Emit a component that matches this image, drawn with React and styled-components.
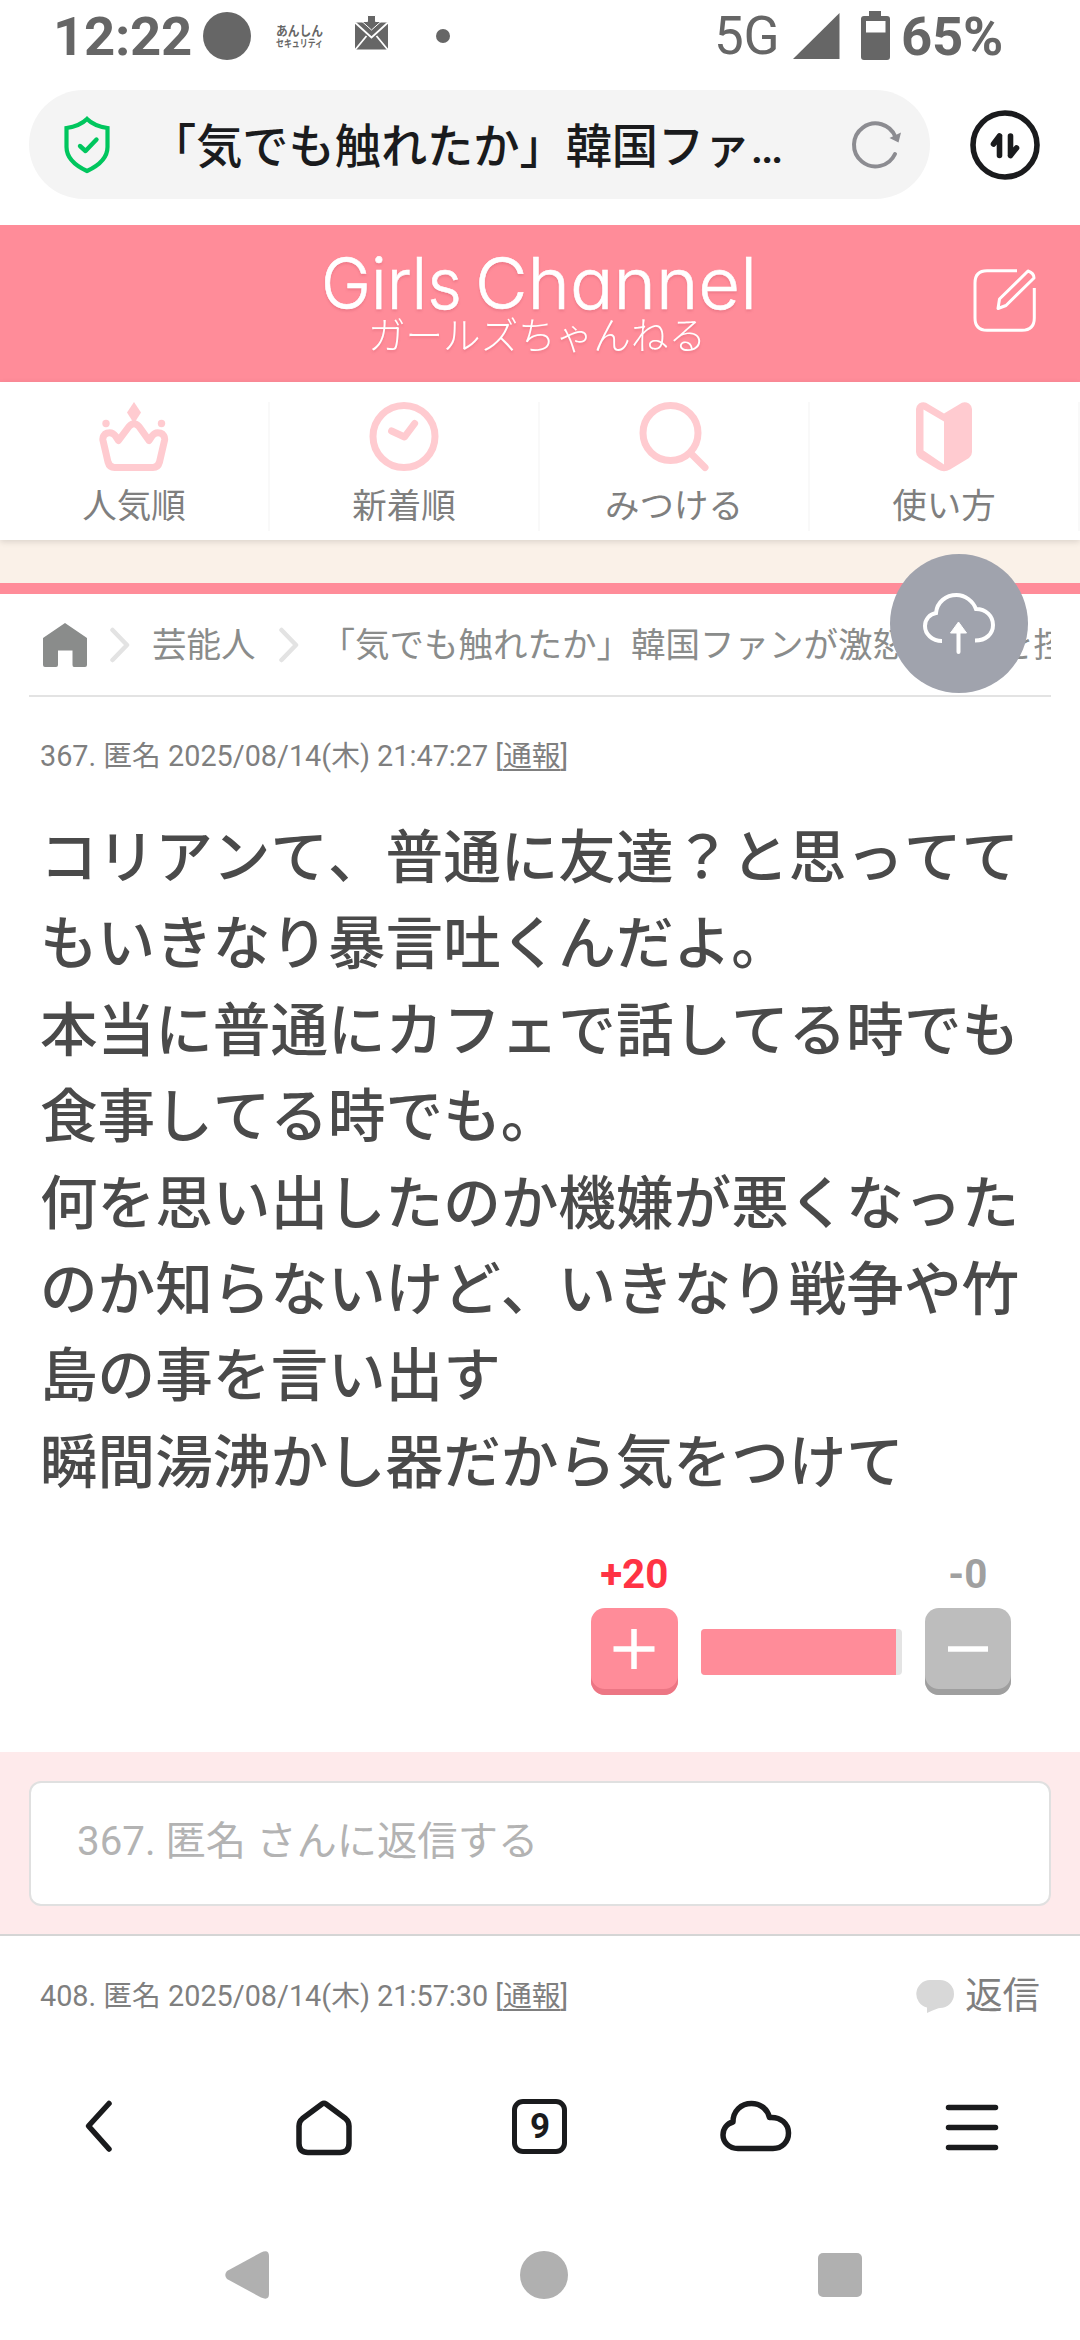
import styled, { createGlobalStyle } from "styled-components";

const menus = [
  { label: "人気順", icon: <CrownIcon /> },
  { label: "新着順", icon: <ClockIcon /> },
  { label: "みつける", icon: <SearchIcon /> },
  { label: "使い方", icon: <BeginnerIcon /> },
];

const commentLines = [
  "コリアンて、普通に友達？と思っててもいきなり暴言吐くんだよ。",
  "本当に普通にカフェで話してる時でも食事してる時でも。",
  "何を思い出したのか機嫌が悪くなったのか知らないけど、いきなり戦争や竹島の事を言い出す",
  "瞬間湯沸かし器だから気をつけて",
];

function App() {
  return (
    <>
      <GlobalStyle />
      <StScreen>
        <StatusBar />
        <AddressBar />
        <SiteHeader />
        <StMenu>
          {menus.map(({ label, icon }) => (
            <StMenuItem key={label}>
              {icon}
              <span>{label}</span>
            </StMenuItem>
          ))}
        </StMenu>
        <StAdSpace />
        <Breadcrumb />
        <StComment>
          <Meta number="367" time="2025/08/14(木) 21:47:27" />
          <StCommentBody>
            {commentLines.map((line) => (
              <p key={line}>{line}</p>
            ))}
          </StCommentBody>
          <Votes plus={20} minus={0} />
        </StComment>
        <StReplyArea>
          <StReplyInput>367. 匿名 さんに返信する</StReplyInput>
        </StReplyArea>
        <StNextComment>
          <Meta number="408" time="2025/08/14(木) 21:57:30" />
          <StReplyLink>
            <svg width="38" height="33" viewBox="0 0 38 33">
              <path
                d="M14 0H24A14 14 0 0 1 24 28Q22 28 11 33V27.6A14 14 0 0 1 14 0Z"
                fill="#d8d8d8"
              />
            </svg>
            <span>返信</span>
          </StReplyLink>
        </StNextComment>
        <BrowserToolbar />
        <SystemNavigation />
        <StUploadButton>
          <svg width="74" height="64" viewBox="0 0 74 64">
            <path
              d="M20 49C10 49 3 42 3 34C3 27 8 22 14 21C15 10 24 3 34.5 3C43 3 51 9 54 17C64 17 71 24 71 33C71 42 64 48.500 53 48.500"
              fill="none"
              stroke="#fff"
              strokeWidth="4"
            />
            <path d="M36.500 60V38" stroke="#fff" strokeWidth="4" strokeLinecap="round" />
            <path d="M36.500 30L44.500 41H28.500Z" fill="#fff" stroke="#fff" strokeLinejoin="round" />
          </svg>
        </StUploadButton>
      </StScreen>
    </>
  );
}

export default App;

function StatusBar() {
  return (
    <StStatusBar>
      <StStatusGroup>
        <StStatusText $width={137}>12:22</StStatusText>
        <svg width="260" height="72" viewBox="190 0 260 72" fill="#666">
          <circle cx="227" cy="36" r="24" />
          <text x="276" y="35" fontSize="13" fontWeight="700" textLength="47" lengthAdjust="spacingAndGlyphs">
            あんしん
          </text>
          <text
            x="276"
            y="47"
            fontSize="10.500"
            fontWeight="700"
            textLength="47"
            lengthAdjust="spacingAndGlyphs"
          >
            セキュリティ
          </text>
          <path d="M355 22.500H388V49.500H355Z" />
          <path
            d="M355 22.500L371.500 37.500L388 22.500M355 50L366.500 36M388 50L376.500 36"
            fill="none"
            stroke="#fff"
            strokeWidth="1.800"
          />
          <path
            d="M367.500 15.500H375.500V21.500H381L371.500 30L362 21.500H367.500Z"
            stroke="#fff"
            strokeWidth="1"
          />
          <circle cx="443" cy="36" r="7" />
        </svg>
      </StStatusGroup>
      <StStatusGroup>
        <StStatusText $light $width={67}>5G</StStatusText>
        <svg width="120" height="72" viewBox="779 0 120 72" fill="#666">
          <path d="M837.500 13V59H791Z" />
          <path d="M867 11H879V16H885Q888 16 888 19V57Q888 60 885 60H862Q859 60 859 57V19Q859 16 862 16H867Z" />
          <path d="M864 21H883.500V32.500H864Z" fill="#fff" />
        </svg>
        <StStatusText>65%</StStatusText>
      </StStatusGroup>
    </StStatusBar>
  );
}

function AddressBar() {
  return (
    <StAddressBar>
      <StAddress>
        <svg width="48" height="58" viewBox="0 0 48 58" fill="none" stroke="#00c65e">
          <path
            d="M24 3Q17 10 3.500 12V31C3.500 42 11 49 24 55C37 49 44.500 42 44.500 31V12Q31 10 24 3Z"
            strokeWidth="4.200"
          />
          <path d="M17 30L22.500 35L33.500 23.500" strokeWidth="4.400" strokeLinecap="round" strokeLinejoin="round" />
        </svg>
        <StAddressTitle>「気でも触れたか」韓国ファ…</StAddressTitle>
        <svg width="52" height="52" viewBox="0 0 52 52" fill="none">
          <path
            d="M44 35A21.500 21.500 0 1 1 44.500 18"
            stroke="#8c8c91"
            strokeWidth="4"
            strokeLinecap="round"
          />
          <path d="M38.500 19L50 13.500L47.500 23.500Z" fill="#8c8c91" />
        </svg>
      </StAddress>
      <svg width="70" height="70" viewBox="0 0 70 70" fill="none" stroke="#1a1b1d">
        <circle cx="35" cy="35" r="32" strokeWidth="5.600" />
        <path
          d="M29.500 26V45.500M29.500 26L23.500 34M40.500 26V45.500M40.500 45.500L46.500 38"
          strokeWidth="5.600"
          strokeLinecap="round"
          strokeLinejoin="round"
        />
      </svg>
    </StAddressBar>
  );
}

function SiteHeader() {
  return (
    <StSiteHeader>
      <StLogo width="440" height="130" viewBox="320 235.500 440 130">
        <text className="en" x="321" y="308" textLength="141" lengthAdjust="spacingAndGlyphs">
          Girls
        </text>
        <text className="en" x="475" y="308" textLength="282" lengthAdjust="spacingAndGlyphs">
          Channel
        </text>
        <text className="ja" x="368" y="348.500" textLength="338" lengthAdjust="spacingAndGlyphs">
          ガールズちゃんねる
        </text>
      </StLogo>
      <svg width="70" height="70" viewBox="0 0 70 70" fill="none" stroke="#fff" strokeWidth="3">
        <path d="M47 4.800H17Q5 4.800 5 17V52Q5 64.300 17 64.300H52Q64.300 64.300 64.300 52V22" />
        <path d="M58 5Q64 7 64 12L36 39.500L28 42.500L29.500 33Z" strokeLinejoin="round" />
      </svg>
    </StSiteHeader>
  );
}

function Breadcrumb() {
  return (
    <StBreadcrumb>
      <svg width="44" height="44" viewBox="0 0 44 44">
        <path
          d="M22 0L44 15V42Q44 44 42 44H31Q29.500 44 29.500 42V27.500H15V42Q15 44 13 44H2Q0 44 0 42V15Z"
          fill="#8a8c8b"
        />
      </svg>
      <Chevron />
      <StCrumb>芸能人</StCrumb>
      <Chevron />
      <StTopicTitle>
        <span>「気でも触れたか」韓国ファンが激怒</span>
        <span>を控</span>
      </StTopicTitle>
    </StBreadcrumb>
  );
}

function Chevron() {
  return (
    <StChevron width="20" height="36" viewBox="0 0 20 36">
      <path
        d="M2.500 3L17 18L2.500 33"
        fill="none"
        stroke="#e3e3e3"
        strokeWidth="4.500"
        strokeLinecap="round"
        strokeLinejoin="round"
      />
    </StChevron>
  );
}

function Meta({ number, time }) {
  return (
    <StMeta>
      {number}. 匿名 {time} [<u>通報</u>]
    </StMeta>
  );
}

function Votes({ plus, minus }) {
  return (
    <StVotes>
      <StVote $color="#ff3344">
        <span>+{plus}</span>
        <StVoteButton $color="#ff8c99" $edge="#ec7684">
          <svg width="42" height="42" viewBox="0 0 42 42" stroke="#fff" strokeWidth="5.500">
            <path d="M0.500 21H41.500M21 1V41" />
          </svg>
        </StVoteButton>
      </StVote>
      <StVoteBar>
        <div />
      </StVoteBar>
      <StVote $color="#a0a0a0">
        <span>-{minus}</span>
        <StVoteButton $color="#bdbdbd" $edge="#9f9f9f">
          <svg width="42" height="42" viewBox="0 0 42 42" stroke="#fff" strokeWidth="5.500">
            <path d="M1 21H41" />
          </svg>
        </StVoteButton>
      </StVote>
    </StVotes>
  );
}

function BrowserToolbar() {
  return (
    <StToolbar>
      <StToolbarIcon viewBox="0 0 80 80">
        <path d="M41 17.500L20.500 40L41 63" />
      </StToolbarIcon>
      <StToolbarIcon viewBox="0 0 80 80">
        <path d="M38 18Q40 16.500 42 18L61.500 32.500Q65 35.500 65 40V57.500Q65 66.500 56 66.500H24Q15 66.500 15 57.500V40Q15 35.500 18.500 32.500Z" />
      </StToolbarIcon>
      <StTabCount>
        <span>9</span>
      </StTabCount>
      <StToolbarIcon viewBox="0 0 80 80">
        <path d="M22 62.500C13 62.500 7 56 7 49C7 42.500 11 37.500 17 36C17 25 25 17.500 35.500 17.500C45 17.500 51.500 23.500 53.500 31.500C65 30.500 72.500 38 72.500 47C72.500 56 66 62.500 57 62.500Z" />
      </StToolbarIcon>
      <StToolbarIcon viewBox="0 0 80 80">
        <path d="M16.500 21.500H63.500M16.500 41.500H63.500M16.500 61.500H63.500" />
      </StToolbarIcon>
    </StToolbar>
  );
}

function SystemNavigation() {
  return (
    <StSystemNavigation>
      <svg width="44" height="48" viewBox="0 0 44 48">
        <path d="M2 20L36 1.500Q44 -2 44 5V43Q44 50 36 46.500L2 28Q-1.500 24 2 20Z" />
      </svg>
      <svg width="48" height="48" viewBox="0 0 48 48">
        <circle cx="24" cy="24" r="24" />
      </svg>
      <svg width="44" height="44" viewBox="0 0 44 44">
        <rect width="44" height="44" rx="5" />
      </svg>
    </StSystemNavigation>
  );
}

function CrownIcon() {
  return (
    <svg width="70" height="70" viewBox="0 0 70 70" fill="#ffcbd0">
      <path d="M35 0L42 10.500L36 20H34L28 10.500Z" />
      <circle cx="7" cy="21.500" r="3.700" />
      <circle cx="62.500" cy="21.500" r="3.700" />
      <path
        d="M19.500 38.500L16.500 34C12 28 2.500 31 4 38.500L9 60Q10.500 65.500 15.500 65.500H54Q59 65.500 60.500 60L65.500 38.500C67 31 57.500 28 53 34L50 38.500L40 24.500Q35 19 30 24.500Z"
        fill="none"
        stroke="#ffcbd0"
        strokeWidth="7"
        strokeLinejoin="round"
      />
    </svg>
  );
}

function ClockIcon() {
  return (
    <svg width="70" height="70" viewBox="0 0 70 70" fill="none" stroke="#ffcbd0">
      <circle cx="35" cy="34.500" r="31" strokeWidth="7" />
      <path d="M22.600 29L35.500 35L45.600 21.500" strokeWidth="7" strokeLinecap="round" strokeLinejoin="round" />
    </svg>
  );
}

function SearchIcon() {
  return (
    <svg width="70" height="70" viewBox="0 0 70 70" fill="none" stroke="#ffcbd0">
      <circle cx="31.500" cy="31" r="27.500" strokeWidth="7" />
      <path d="M52 51.500L66 65.500" strokeWidth="7" strokeLinecap="round" />
    </svg>
  );
}

function BeginnerIcon() {
  return (
    <svg width="70" height="70" viewBox="-7 0 70 70" fill="#ffcbd0">
      <path
        fillRule="evenodd"
        d="M28 11.500L46 0.800Q49 -0.800 53 1.500Q56 4 56 7V50Q56 53.500 53 56L34 67.500Q28 71 22 67.500L3 56Q0 53.500 0 50V7Q0 4 3 1.500Q7 -0.800 10 0.800ZM7.500 7.500V48.500L28 62.500V19.500Z"
      />
    </svg>
  );
}

const GlobalStyle = createGlobalStyle`
  * {
    box-sizing: border-box;
  }

  body {
    margin: 0;
    background-color: #fff;
    font-family: Roboto, "Noto Sans CJK JP", sans-serif;
  }

  p {
    margin: 0;
  }

  svg {
    display: block;
    flex-shrink: 0;
  }
`;

const StScreen = styled.div`
  position: relative;
  display: flex;
  flex-direction: column;
  width: 1080px;
  height: 2340px;
  overflow: hidden;
`;

const StStatusBar = styled.div`
  display: flex;
  justify-content: space-between;
  height: 72px;
  padding: 0 77px 0 53px;
`;

const StStatusGroup = styled.div`
  display: flex;
  align-items: center;
`;

const StStatusText = styled.span`
  width: ${({ $width }) => ($width ? `${$width}px` : "auto")};
  font-size: ${({ $light }) => ($light ? "53px" : "54.5px")};
  font-weight: ${({ $light }) => ($light ? 400 : 700)};
  line-height: 71px;
  letter-spacing: -0.3px;
  color: #666;
`;

const StAddressBar = styled.div`
  display: flex;
  align-items: center;
  justify-content: space-between;
  height: 153px;
  padding: 18px 40px 26px 29px;
`;

const StAddress = styled.div`
  display: flex;
  align-items: center;
  width: 901px;
  height: 109px;
  padding: 0 27px 0 34px;
  border-radius: 55px;
  background-color: #f4f4f4;
`;

const StAddressTitle = styled.span`
  flex: 1;
  padding: 0 0 5px 39px;
  font-size: 46.2px;
  font-weight: 500;
  white-space: nowrap;
  color: #1a1b1d;
`;

const StSiteHeader = styled.header`
  display: flex;
  align-items: center;
  justify-content: space-between;
  height: 157px;
  padding: 0 40px 6px 320px;
  background-color: #ff8c99;
`;

const StLogo = styled.svg`
  fill: #fff;
  overflow: visible;
  filter: drop-shadow(0 2px 1px rgba(190, 70, 90, 0.25));

  & .en {
    font-family: Inter, sans-serif;
    font-size: 71px;
    font-weight: 300;
    font-feature-settings: "cv11";
    stroke: #fff;
    stroke-width: 0.6px;
  }

  & .ja {
    font-family: "Noto Sans CJK JP", sans-serif;
    font-size: 38px;
    font-weight: 300;
  }
`;

const StMenu = styled.nav`
  position: relative;
  display: grid;
  grid-template-columns: repeat(4, 270px);
  height: 158px;
  padding: 20px 0 15px;
  background-color: #fff;
  box-shadow: 0 2px 6px rgba(0, 0, 0, 0.12);
`;

const StMenuItem = styled.div`
  display: flex;
  flex-direction: column;
  align-items: center;
  gap: 9px;
  border-right: 2px solid #f9f9f9;
  font-size: 34.5px;
  line-height: 50px;
  color: #7f7f7f;
`;

const StAdSpace = styled.div`
  height: 54px;
  border-bottom: 11px solid #ff8c99;
  background-color: #faf1e8;
`;

const StBreadcrumb = styled.div`
  display: flex;
  align-items: center;
  height: 103px;
  margin: 0 29px;
  padding-left: 14px;
  border-bottom: 2px solid #e3e3e3;
  font-size: 34.5px;
  font-kerning: none;
  white-space: nowrap;
  overflow: hidden;
  color: #8a8c8b;
`;

const StCrumb = styled.span`
  padding-bottom: 5px;
`;

const StChevron = styled.svg`
  margin: 0 22px 0 23px;
`;

const StTopicTitle = styled(StCrumb)`
  display: flex;
  gap: 92px;
`;

const StComment = styled.article`
  height: 1055px;
  padding: 39px 40px 0;
`;

const StMeta = styled.div`
  font-size: 28.8px;
  line-height: 40px;
  color: #7f7f7f;

  & u {
    text-underline-offset: 3px;
  }
`;

const StCommentBody = styled.div`
  width: 1000px;
  margin-top: 40px;
  font-size: 57.6px;
  font-weight: 500;
  font-kerning: none;
  line-height: 86.4px;
  color: #4a4a4a;
`;

const StVotes = styled.div`
  display: flex;
  align-items: flex-end;
  justify-content: flex-end;
  margin: 43px 29px 0 0;
`;

const StVote = styled.div`
  display: flex;
  flex-direction: column;
  align-items: center;
  gap: 8px;
  font-size: 40.3px;
  font-weight: 700;
  line-height: 50px;
  color: ${({ $color }) => $color};
`;

const StVoteButton = styled.div`
  display: flex;
  align-items: center;
  justify-content: center;
  width: 86.5px;
  height: 87px;
  border-radius: 14px;
  background-color: ${({ $color }) => $color};
  box-shadow: inset 0 -6px 0 ${({ $edge }) => $edge};
  padding-bottom: 5px;
`;

const StVoteBar = styled.div`
  width: 201px;
  height: 46px;
  margin: 0 23px 20px;
  border-radius: 4px;
  background-color: #e4e4e4;
  overflow: hidden;

  & div {
    width: 195px;
    height: 100%;
    background-color: #ff8c99;
  }
`;

const StReplyArea = styled.div`
  height: 184px;
  padding: 29px;
  border-bottom: 2px solid #d5d5d5;
  background-color: #feeaeb;
`;

const StReplyInput = styled.div`
  height: 125px;
  padding-left: 46px;
  border: 2px solid #e0e0e0;
  border-radius: 12px;
  background-color: #fff;
  font-size: 40.3px;
  line-height: 117px;
  color: #b3b3b3;
`;

const StNextComment = styled.article`
  display: flex;
  align-items: flex-start;
  justify-content: space-between;
  height: 144px;
  padding: 40px 40px 0;
`;

const StReplyLink = styled.div`
  display: flex;
  align-items: center;
  gap: 11px;
  font-size: 37.4px;
  line-height: 40px;
  color: #7f7f7f;
`;

const StToolbar = styled.div`
  display: flex;
  justify-content: space-around;
  height: 150px;
  padding-top: 6px;
`;

const StToolbarIcon = styled.svg`
  width: 80px;
  height: 80px;
  fill: none;
  stroke: #1a1b1d;
  stroke-width: 5.5px;
  stroke-linecap: round;
  stroke-linejoin: round;
`;

const StTabCount = styled.div`
  display: flex;
  align-items: center;
  justify-content: center;
  width: 55px;
  height: 55px;
  margin: 13px 12px 0;
  border: 5.5px solid #1a1b1d;
  border-radius: 11px;
  font-size: 35px;
  font-weight: 700;
  color: #1a1b1d;
`;

const StSystemNavigation = styled.div`
  display: flex;
  align-items: center;
  justify-content: space-between;
  height: 90px;
  padding: 0 218px 0 225px;
  fill: #b0b0b0;
`;

const StUploadButton = styled.div`
  position: absolute;
  top: 554px;
  left: 890px;
  display: flex;
  align-items: center;
  justify-content: center;
  width: 138px;
  height: 139px;
  border-radius: 50%;
  background-color: #a0a3ad;
`;
